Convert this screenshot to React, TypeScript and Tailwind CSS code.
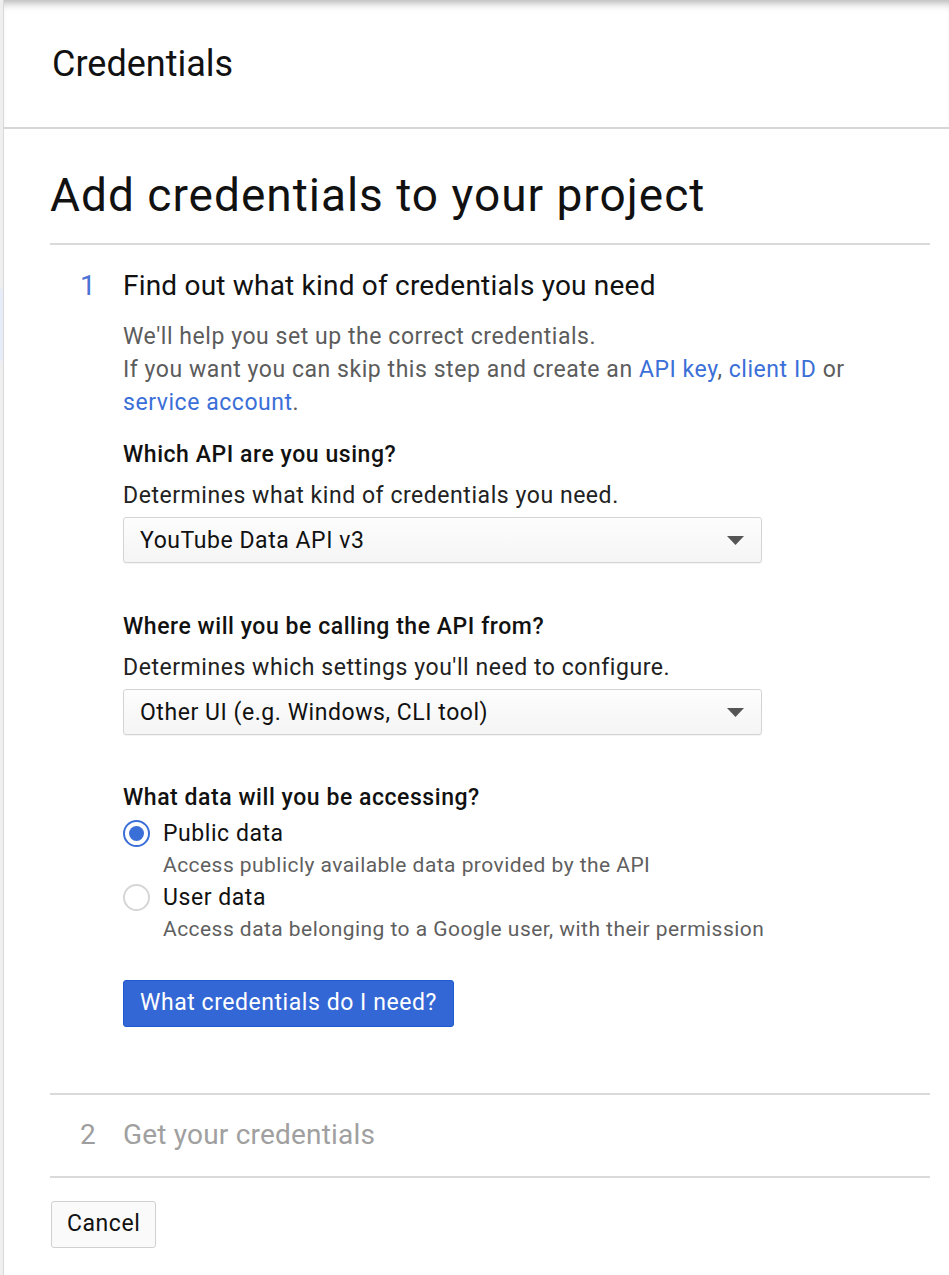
import React from "react";

const font = { fontFamily: "Roboto, 'Noto Sans', Arial, sans-serif" };

function Select({ value }: { value: string }) {
  return (
    <div className="mt-[5px] w-[639px] h-[46px] flex items-center justify-between pl-[16px] pr-[17px] border border-[#d4d4d4] rounded-[3px] bg-gradient-to-b from-[#fdfdfd] to-[#f5f5f5] shadow-[0_1px_1px_rgba(0,0,0,0.05)]">
      <span className="text-[23px] tracking-[0.55px] leading-[33px] text-[#111]">{value}</span>
      <svg width="17" height="9" viewBox="0 0 17 9">
        <polygon points="0,0 17,0 8.5,9" fill="#555" />
      </svg>
    </div>
  );
}

function Radio({ checked, label, desc }: { checked: boolean; label: string; desc: string }) {
  return (
    <div className="flex">
      <div className="w-[40px] h-[31px] flex items-center">
        {checked ? (
          <div className="w-[27px] h-[27px] rounded-full border-2 border-[#3b6fd8] flex items-center justify-center">
            <div className="w-[15px] h-[15px] rounded-full bg-[#3b6fd8]" />
          </div>
        ) : (
          <div className="w-[27px] h-[27px] rounded-full border-2 border-[#d6d6d6] bg-white" />
        )}
      </div>
      <div>
        <div className="text-[23px] tracking-[0.55px] leading-[31px] text-[#111]">{label}</div>
        <div className="text-[21px] tracking-[0.45px] leading-[33px] text-[#5f5f5f]">{desc}</div>
      </div>
    </div>
  );
}

export default function App() {
  return (
    <div className="flex min-h-[1275px] bg-white" style={font}>
      {/* left nav edge */}
      <div className="w-[4px] shrink-0 bg-[#efefef] border-r border-[#d9d9d9] flex flex-col">
        <div className="h-[289px]" />
        <div className="h-[72px] bg-[#e6ecf8]" />
      </div>

      <div className="flex-1">
        {/* Header */}
        <div className="h-[129px] flex items-center pl-[48px] border-b-2 border-[#d6d6d6] shadow-[inset_0_9px_8px_-6px_rgba(0,0,0,0.3)]">
          <h2 className="text-[36px] text-[#111]">Credentials</h2>
        </div>

        <div className="pl-[46px] pr-[19px]">
          <h1 className="mt-[40px] pb-[22px] text-[46px] tracking-[1px] leading-[52px] text-[#111] border-b-2 border-[#dadada]">
            Add credentials to your project
          </h1>

          {/* Step 1 */}
          <div className="pb-[66px] border-b-2 border-[#dadada]">
            <div className="mt-[23px] flex items-center h-[36px] text-[28px] tracking-[0.2px]">
              <span className="w-[73px] pl-[30px] text-[#4a72d4]">1</span>
              <span className="text-[#111]">Find out what kind of credentials you need</span>
            </div>

            <div className="pl-[73px] text-[23px] tracking-[0.55px]">
              <p className="mt-[16px] leading-[33px] text-[#5c5c5c]">
                We'll help you set up the correct credentials.
                <br />
                If you want you can skip this step and create an{" "}
                <a className="text-[#3b6fd8]">API key</a>,{" "}
                <a className="text-[#3b6fd8]">client ID</a> or
                <br />
                <a className="text-[#3b6fd8]">service account</a>.
              </p>

              <div className="mt-[19px] leading-[33px] font-medium text-[#111]">Which API are you using?</div>
              <div className="mt-[8px] leading-[33px] text-[#222]">Determines what kind of credentials you need.</div>
              <Select value="YouTube Data API v3" />

              <div className="mt-[47px] leading-[33px] font-medium text-[#111]">Where will you be calling the API from?</div>
              <div className="mt-[8px] leading-[33px] text-[#222]">Determines which settings you'll need to configure.</div>
              <Select value="Other UI (e.g. Windows, CLI tool)" />

              <div className="mt-[46px] leading-[33px] font-medium text-[#111]">What data will you be accessing?</div>
              <div className="mt-[4px]">
                <Radio checked label="Public data" desc="Access publicly available data provided by the API" />
                <Radio checked={false} label="User data" desc="Access data belonging to a Google user, with their permission" />
              </div>

              <button className="mt-[34px] h-[47px] px-[16px] rounded-[3px] bg-[#3367d6] border border-[#1f5ad0] text-white">
                What credentials do I need?
              </button>
            </div>
          </div>

          {/* Step 2 */}
          <div className="pt-[22px] pb-[23px] border-b-2 border-[#dadada]">
            <div className="flex items-center h-[36px] text-[28px] tracking-[0.2px]">
              <span className="w-[73px] pl-[30px] text-[#9e9e9e]">2</span>
              <span className="text-[#a0a0a0]">Get your credentials</span>
            </div>
          </div>

          <button className="mt-[23px] ml-[1px] h-[47px] px-[15px] rounded-[3px] bg-[#fafafa] border border-[#d0d0d0] text-[23px] tracking-[0.55px] text-[#111]">
            Cancel
          </button>
        </div>
      </div>
    </div>
  );
}
